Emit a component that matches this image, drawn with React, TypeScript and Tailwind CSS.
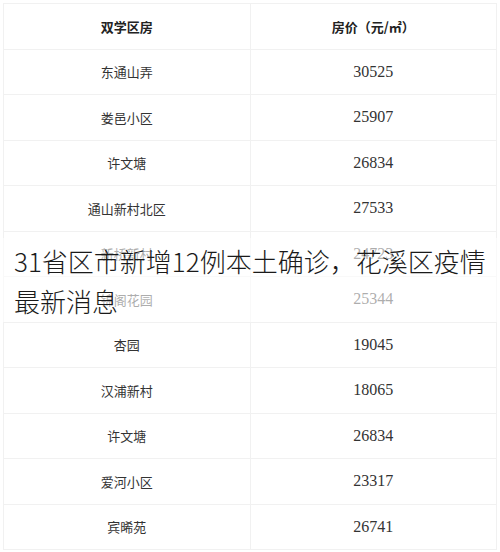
const rows = [
  { name: '东通山弄', price: '30525' },
  { name: '娄邑小区', price: '25907' },
  { name: '许文塘', price: '26834' },
  { name: '通山新村北区', price: '27533' },
  { name: '新桥新村', price: '24723' },
  { name: '锦阁花园', price: '25344' },
  { name: '杏园', price: '19045' },
  { name: '汉浦新村', price: '18065' },
  { name: '许文塘', price: '26834' },
  { name: '爱河小区', price: '23317' },
  { name: '宾晞苑', price: '26741' },
]

const cjk = "font-['Noto_Sans_CJK_SC',sans-serif]"

function App() {
  return (
    <div className="relative h-[552px] w-[500px] overflow-hidden bg-white">
      <div className="px-[3px] pt-[3px]">
        <div className="grid grid-cols-2 border-l border-t border-[#f1f1f1]">
          <div className={`flex h-[45.5px] items-center justify-center border-b border-r border-[#f1f1f1] text-[13px] font-bold text-[#222] ${cjk}`}>
            双学区房
          </div>
          <div className={`flex h-[45.5px] items-center justify-center border-b border-r border-[#f1f1f1] text-[13px] font-bold text-[#222] ${cjk}`}>
            房价（元/㎡）
          </div>
          {rows.map((r, i) => (
            <div key={i} className="contents">
              <div className={`flex h-[45.5px] items-center justify-center border-b border-r border-[#f1f1f1] text-[13px] text-[#333] ${cjk}`}>
                {r.name}
              </div>
              <div className="flex h-[45.5px] items-center justify-center border-b border-r border-[#f1f1f1] font-['Liberation_Serif',serif] text-[16px] text-[#333]">
                {r.price}
              </div>
            </div>
          ))}
        </div>
      </div>

      <div className="absolute left-0 right-0 top-[238px] h-[84px] bg-white/60 pl-[14px] pt-[3px]">
        <p className={`text-[26px] font-light leading-[40px] text-[#1a1a1a] ${cjk}`}>
          31省区市新增12例本土确诊，花溪区疫情最新消息
        </p>
      </div>
    </div>
  )
}

export default App
